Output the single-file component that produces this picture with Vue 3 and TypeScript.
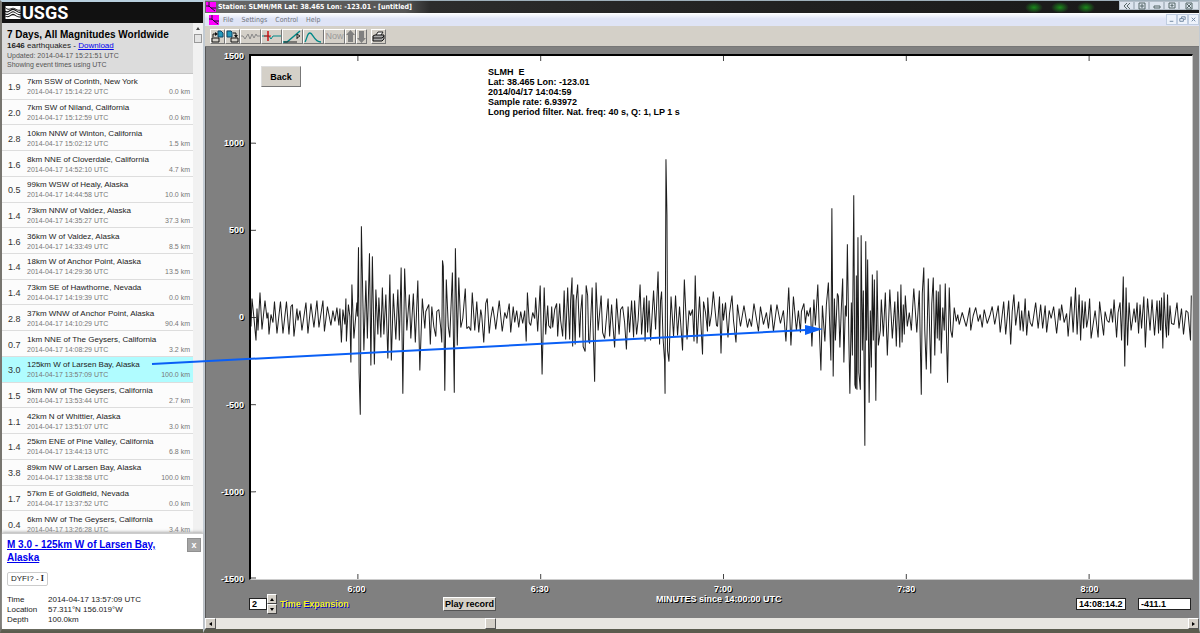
<script setup lang="ts">
import { ref } from 'vue'

interface Quake {
  mag: string
  place: string
  time: string
  depth: string
}

const quakes: Quake[] = [
  { mag: '1.9', place: '7km SSW of Corinth, New York', time: '15:14:22', depth: '0.0' },
  { mag: '2.0', place: '7km SW of Niland, California', time: '15:12:59', depth: '0.0' },
  { mag: '2.8', place: '10km NNW of Winton, California', time: '15:02:12', depth: '1.5' },
  { mag: '1.6', place: '8km NNE of Cloverdale, California', time: '14:52:10', depth: '4.7' },
  { mag: '0.5', place: '99km WSW of Healy, Alaska', time: '14:44:58', depth: '10.0' },
  { mag: '1.4', place: '73km NNW of Valdez, Alaska', time: '14:35:27', depth: '37.3' },
  { mag: '1.6', place: '36km W of Valdez, Alaska', time: '14:33:49', depth: '8.5' },
  { mag: '1.4', place: '18km W of Anchor Point, Alaska', time: '14:29:36', depth: '13.5' },
  { mag: '1.4', place: '73km SE of Hawthorne, Nevada', time: '14:19:39', depth: '0.0' },
  { mag: '2.8', place: '37km WNW of Anchor Point, Alaska', time: '14:10:29', depth: '90.4' },
  { mag: '0.7', place: '1km NNE of The Geysers, California', time: '14:08:29', depth: '3.2' },
  { mag: '3.0', place: '125km W of Larsen Bay, Alaska', time: '13:57:09', depth: '100.0' },
  { mag: '1.5', place: '5km NW of The Geysers, California', time: '13:53:44', depth: '2.7' },
  { mag: '1.1', place: '42km N of Whittier, Alaska', time: '13:51:07', depth: '3.0' },
  { mag: '1.4', place: '25km ENE of Pine Valley, California', time: '13:44:13', depth: '6.8' },
  { mag: '3.8', place: '89km NW of Larsen Bay, Alaska', time: '13:38:58', depth: '100.0' },
  { mag: '1.7', place: '57km E of Goldfield, Nevada', time: '13:37:52', depth: '0.0' },
  { mag: '0.4', place: '6km NW of The Geysers, California', time: '13:26:28', depth: '3.4' },
]
const selected = ref(11)

const menus = ['File', 'Settings', 'Control', 'Help']
const yLabels = ['1500', '1000', '500', '0', '-500', '-1000', '-1500']
const xLabels = ['6:00', '6:30', '7:00', '7:30', '8:00']
const xTicks = [357, 540, 723, 906, 1089]
const yTicks = [143, 230, 317, 404, 491]

const expansion = ref('2')
const cursorTime = ref('14:08:14.2')
const cursorValue = ref('-411.1')
const scroll = ref(28)

// Turning points of the ground motion trace
const trace = `250,326 251,298 253,318 255,340 256,308 257,330 259,292 261,329 264,300 266,318 267,312 268,334 270,314
272,322 273.5,301 276,333 279.5,301 282,333 285.5,301 288,334 290,306 291.5,304 293,336 296,308 297,320 299,310 301,330
305,302 307,333 310,303 313,327 316,300 318,327 322,300 323.5,331 326.5,306 330,325 332,310 334,321 336,307 338,325
339,308 340.5,342 342,309 344,324 345,298 345.5,341 347.5,304 349,316 350,362 351,284 353,338 356,302 356.5,316
357.6,247 358.2,372 359.4,414 360.5,226 363,350 365,280 366.5,338 368.6,253 370,365 371.5,256 373.5,364 375,289
377,334 378,297 380,337 381.5,287 383,334 385,294 387,358 389,274 390.5,360 392.5,293 395,339 397,289 398.5,340
400.3,267 402,393 403.8,268 406,330 408.5,294 410,338 412.5,293 414.5,342 417,280 419,370 421.5,298 424,328 425,311
428,304 429.5,344 431,306 433,326 435,336 436,311 438,309 440,328 441,342 441.7,260 442.5,266 444,390 445.5,279 447.5,326
449,337 451.6,272 453.5,392 454.6,248 456.5,345 458,277 460,327 462,318 464.5,288 466,328 468,326 470,330 471.5,292
474,330 476,301 478,332 480,309 481,315 483,342 485,303 486.5,298 488.5,333 490,318 492,306 494,320 495,329 498.5,300
501.5,331 504,312 506,318 508.5,303 510,332 512.5,306 514,322 516,310 518,327 520,311 522,323 524,310 525.5,341
526.7,292 528.5,322 530,325 532,312 534,318 535,297 537,331 539.5,285 541.4,374 543.5,287 545,334 547,305 548,325
550,328 551,306 552,327 554,309 556,303 557,336 559,303 560,320 562,336 563.5,290 565,339 567,287 569,339 570,300
571.4,277 572,346 573,294 574.5,344 575.5,300 577,284 579,337 580,312 581.5,294 582.5,346 584.5,351 585.5,285 587,295
588,340 589,343 591.5,287 592.5,330 594,381 595.4,282 597.5,330 600.5,295 602,332 604,338 607.5,298 609,336 611,304
612,320 614,347 616,298 618.5,334 620,309 622,306 624,322 625.8,349 627.5,306 629,332 631,300 633,337 634,300 636,334
637.5,320 639.5,284 641,334 643.5,297 644.5,341 646,295 647,332 648.5,300 650,340 653,290 655,329 657.5,271 659,344
660,300 661,291 662.5,338 664,360 664.5,393 665.4,159 666.4,215 667,350 668.4,361 670.5,296 673,336 675,295 677,335
679,306 682,350 683.8,279 686.5,339 688.5,310 690,315 692,309 693.5,341 694.7,275 696.5,343 699,296 702,354 703,301
705,312 707,331 707.2,297 709,326 711,313 712.8,291 716,325 717,326 719,296 720.5,353 722,303 723,320 725,302
727.5,337 729,313 731.5,295 733,320 735.5,342 737,304 740,326 743.5,305 747,327 749,318 751,326 753.5,303 758,331
760,306 763,324 766,312 768,328 770.5,304 773,331 776.5,304 780,323 783,310 785.5,341 788.3,287 790.5,345 793,296
796,330 798,310 800,332 801,311 803.5,303 805,323 806.5,310 808,316 810,307 811.5,346 813.5,299 815,325 817.4,284
819,331 820.5,370 822,305 824.5,341 826,304 828,282 829.5,330 830.5,360 831.5,208 832.8,376 834,298 835,340 837,293
838,296 839.5,347 841,307 842.3,278 843.5,362 845,305 846,316 847,244 848.5,340 849.5,393 851,302 852,355 853.4,195
854.5,384 855.4,388 856,275 856.6,389 857.6,237 858.5,372 860,389 860.8,235 862,350 863,290 864.5,445 865.4,241
866.3,340 867.3,259 868.8,402 870,310 871,367 872,274 873,340 874,279 875.5,400 876.7,270 878,345 880,330 881,299
883,336 885,292 887,355 889.5,289 892,338 894.5,301 896,346 897.5,291 899.5,347 900.6,284 901.8,342 903,304 904,334
905,295 907,326 909,312 910.5,325 911,330 913.5,288 916.5,332 919,290 921,394 922,293 923.5,267 924.5,330 926,369
928,278 930.5,373 931.5,303 933,277 934.5,355 936,290 937,338 938,291 939,340 939.8,284 941,353 942.5,307 944,330
945,283 947.3,382 949,287 950.5,330 952,337 954,307 956,321 957.5,314 959,324 962,312 966,326 969.5,307 970.5,330
973,315 975.5,307 978,321 980,314 982,327 984,309 987,323 990,314 992,306 994.5,324 998,305 1000,332 1003.5,301
1005.5,334 1008.5,300 1010.5,344 1012,311 1013.7,294 1015.5,325 1018.5,301 1020,330 1021.5,310 1023,331 1025,298
1026.5,335 1028.5,310 1030,322 1032,326 1035.5,302 1038,328 1040.5,304 1042.5,328 1045,305 1046.5,332 1049,310
1051,318 1053.5,306 1056.5,333 1059,308 1060,320 1061.5,304 1064,322 1066.5,313 1068,336 1071,296 1073,332
1075.4,287 1077,334 1079,294 1080.5,340 1082,300 1083.5,328 1085,301 1086.5,327 1088,318 1089.5,298 1091,338 1095,310
1098,337 1099.5,301 1102,323 1103.5,335 1105,311 1107,320 1109,322 1111,308 1112.5,322 1114,299 1116.5,337 1118,312
1120,302 1121.5,340 1123.2,276 1124.7,366 1126,287 1127.5,345 1129,302 1131,330 1134,308 1135.5,322 1137,302
1138.5,333 1140,304 1141.5,328 1143.8,296 1145.3,347 1147.5,298 1150,330 1152,299 1154.5,335 1157,300 1158.5,333
1159.5,300 1160.5,330 1161.5,297 1162.8,348 1164,292 1165.5,325 1166.5,337 1167.5,294 1168.5,335 1170,305 1171.5,323
1174,324 1177,302 1179,328 1181.5,308 1183.5,334 1186,310 1188,312 1190.5,340 1191.3,295`
</script>

<template>
  <main class="desktop">
    <aside class="side">
      <header class="brand">
        <svg class="waves" viewBox="0 0 16 16" aria-hidden="true">
          <path d="M0 1h16v6c-4 1-5-4-9-3-3 1-4 4-7 2z" fill="#fff" />
          <path d="M0 3c4 4 6-1 10 1 2 1 3 2 6 1.500" stroke="#111" fill="none" />
          <path d="M0 8c3 3 5-2 8-2s4 4 8 3M0 10.500c3 3 5-2 8-2s4 4 8 3" stroke="#fff" stroke-width="1.400" fill="none" />
          <path d="M0 12c3 3 5-1 8-1s4 3 8 2v2H0z" fill="#fff" />
        </svg>
        <span>USGS</span>
      </header>
      <div class="feed">
        <div class="feed-main">
          <section class="summary">
            <h1>7 Days, All Magnitudes Worldwide</h1>
            <p class="count"><b>1646</b> earthquakes - <a href="#download">Download</a></p>
            <p>Updated: 2014-04-17 15:21:51 UTC</p>
            <p>Showing event times using UTC</p>
          </section>
          <ul class="list">
            <li v-for="(q, i) in quakes" :key="q.time" :class="{ on: i === selected }" @click="selected = i">
              <span class="mag">{{ q.mag }}</span>
              <div class="event">
                <div class="place">{{ q.place }}</div>
                <div class="meta"><span>2014-04-17 {{ q.time }} UTC</span><span>{{ q.depth }} km</span></div>
              </div>
            </li>
          </ul>
        </div>
        <div class="vscroll"><i class="up"></i><i class="thumb"></i></div>
      </div>
      <section class="detail">
        <div class="detail-head">
          <a href="#event">M 3.0 - 125km W of Larsen Bay, Alaska</a>
          <button class="close" type="button" aria-label="Close">x</button>
        </div>
        <span class="dyfi">DYFI? - <b>I</b></span>
        <dl>
          <dt>Time</dt><dd>2014-04-17 13:57:09 UTC</dd>
          <dt>Location</dt><dd>57.311°N 156.019°W</dd>
          <dt>Depth</dt><dd>100.0km</dd>
        </dl>
      </section>
    </aside>

    <section class="window">
      <header class="title">
        <svg class="app-icon" viewBox="0 0 10 10" aria-hidden="true"><rect width="10" height="10" fill="#f0f" /><path d="M0 4h3l2 2 4 3M3 0v5M5 6h5" stroke="#213" fill="none" /></svg>
        <span>Station: SLMH/MR Lat: 38.465 Lon: -123.01 - [untitled]</span>
        <div class="glow"><i></i><i></i><i></i></div>
        <div class="caption">
          <button type="button" aria-label="Back"><svg viewBox="0 0 10 8"><path d="M5 1 2 4l3 3M8 1 5 4l3 3" /></svg></button>
          <button type="button" aria-label="Pin"><svg viewBox="0 0 10 8"><path d="M2 1h6v6H2zM3 4h4M5 2v4" /></svg></button>
          <button type="button" aria-label="Minimize"><svg viewBox="0 0 10 8"><path d="M2 4h6v2H2z" /></svg></button>
          <button type="button" aria-label="Maximize"><svg viewBox="0 0 10 8"><path d="M2 1h6v5H2zM4 3h2v1H4z" /></svg></button>
          <button type="button" aria-label="Close window" class="wide"><svg viewBox="0 0 10 8"><path d="M2 1h6v6H2zM3 2l4 4M7 2 3 6" /></svg></button>
        </div>
      </header>

      <nav class="menu">
        <svg class="app-icon" viewBox="0 0 10 10" aria-hidden="true"><rect width="10" height="10" fill="#f0f" /><path d="M0 4h3l2 2 4 3M3 0v5M5 6h5" stroke="#213" fill="none" /></svg>
        <button v-for="m in menus" :key="m" type="button">{{ m }}</button>
        <div class="mdi">
          <button type="button" aria-label="Minimize document"><svg viewBox="0 0 10 10"><path d="M3 7h4" /></svg></button>
          <button type="button" aria-label="Restore document"><svg viewBox="0 0 10 10"><path d="M4 4V2h4v3H7M2 4h4v3H2z" /></svg></button>
          <button type="button" aria-label="Close document"><svg viewBox="0 0 10 10"><path d="m3 3 4 4M7 3 3 7" /></svg></button>
        </div>
      </nav>

      <div class="tools">
        <button type="button" class="small" aria-label="Load"><svg viewBox="0 0 13 13"><path d="M7 1h3l2 2v4H7z" fill="#29b" stroke="#146" /><path d="M1 8h7v4H1zM2 7V4h3" stroke="#111" fill="none" /><path d="m4 2 3 2-3 2z" fill="#111" /></svg></button>
        <button type="button" class="small" aria-label="Store"><svg viewBox="0 0 13 13"><path d="M1 1h4l1 1v5H1z" fill="#29b" stroke="#146" /><path d="M5 8h7v4H5zM7 3h3v3" stroke="#111" fill="none" /><path d="m8 5h4l-2 3z" fill="#111" /></svg></button>
        <button type="button" aria-label="Raw trace"><svg viewBox="0 0 19 13"><path d="M0 6h2l2 3 3-5 2 5 2-5 2 4 2-4 1 2h3" stroke="#888" fill="none" /></svg></button>
        <button type="button" aria-label="Center trace"><svg viewBox="0 0 19 13"><path d="M0 6h7l2 3 2-3h8" stroke="#088" fill="none" /><path d="M6 1v10" stroke="#c11" stroke-width="1.5" /><path d="M2 6h7" stroke="#c11" /></svg></button>
        <button type="button" aria-label="Pick"><svg viewBox="0 0 19 13"><path d="M0 12h4L17 1" stroke="#088" stroke-width="1.500" fill="none" /><path d="M1 12h13M14 9V4l3 2-3 2" stroke="#222" fill="none" /></svg></button>
        <button type="button" aria-label="Filter"><svg viewBox="0 0 19 13"><path d="M1 12c2-3 2-9 5-9s4 9 11 9" stroke="#088" stroke-width="1.300" fill="none" /></svg></button>
        <button type="button" class="now" disabled>Now</button>
        <button type="button" class="arrow" aria-label="Up"><svg viewBox="0 0 9 13"><path d="M4.500 0 0 5h2v7h5V5h2z" fill="#808080" /></svg></button>
        <button type="button" class="arrow" aria-label="Down"><svg viewBox="0 0 9 13"><path d="M4.500 13 0 8h2V1h5v7h2z" fill="#808080" /></svg></button>
        <button type="button" class="small print" aria-label="Print"><svg viewBox="0 0 13 13"><path d="M4 5 6 2h5L9 5" fill="#fff" stroke="#222" /><path d="m1 6 2-1h9v4l-2 2H1z" fill="#aaa" stroke="#111" /><path d="M1 8h9l2-2" stroke="#111" fill="none" /></svg></button>
      </div>

      <div class="board">
        <div class="y-axis"><span v-for="l in yLabels" :key="l">{{ l }}</span></div>
        <div class="plot">
          <svg class="chart" viewBox="250 56 942 522" preserveAspectRatio="none" role="img" aria-label="Seismogram">
            <g stroke="#444" shape-rendering="crispEdges">
              <path v-for="x in xTicks" :key="x" :d="`M${x} 56v5M${x} 573v5`" />
              <path v-for="y in yTicks" :key="y" :d="`M250 ${y}h5`" />
              <path d="M250 577h5" />
            </g>
            <polyline :points="trace" fill="none" stroke="#1c1c1c" stroke-width="1" stroke-linejoin="bevel" />
          </svg>
          <button type="button" class="raised back">Back</button>
          <pre class="readout">SLMH  E
Lat: 38.465 Lon: -123.01
2014/04/17 14:04:59
Sample rate: 6.93972
Long period filter. Nat. freq: 40 s, Q: 1, LP 1 s</pre>
        </div>
        <div class="under">
          <div class="x-axis"><span v-for="l in xLabels" :key="l">{{ l }}</span></div>
          <div class="controls">
            <div class="expand">
              <input id="expansion" v-model="expansion" />
              <div class="spin">
                <button type="button" aria-label="Increase"><i class="tri-up"></i></button>
                <button type="button" aria-label="Decrease"><i class="tri-down"></i></button>
              </div>
              <label for="expansion">Time Expansion</label>
            </div>
            <button type="button" class="raised play">Play record</button>
            <span class="axis-name">MINUTES since 14:00:00 UTC</span>
            <div class="values">
              <input v-model="cursorTime" class="time" aria-label="Cursor time" />
              <input v-model="cursorValue" class="value" aria-label="Cursor value" />
            </div>
          </div>
        </div>
      </div>

      <div class="hscroll">
        <button type="button" aria-label="Scroll left"><i class="tri-left"></i></button>
        <input v-model="scroll" type="range" min="0" max="100" aria-label="Time position" />
        <button type="button" aria-label="Scroll right"><i class="tri-right"></i></button>
      </div>
    </section>

    <svg class="pointer" viewBox="0 0 1200 633" preserveAspectRatio="none" aria-hidden="true">
      <path d="M152 364 806 330" stroke="#0a5ff5" stroke-width="2" />
      <path d="m805 325 18 4-18 6z" fill="#0a5ff5" />
    </svg>
  </main>
</template>

<style>
body {
  margin: 0;
  overflow: hidden;
}
</style>

<style scoped>
* {
  box-sizing: border-box;
}
button,
input {
  font: inherit;
  color: inherit;
  margin: 0;
  padding: 0;
  border: 0;
  border-radius: 0;
  background: none;
}
svg {
  display: block;
}
.desktop {
  position: relative;
  display: flex;
  height: 100vh;
  font-family: 'Liberation Sans', Arial, sans-serif;
  background: #4a4a40;
}

/* Earthquake list */
.side {
  flex: none;
  width: 203px;
  display: flex;
  flex-direction: column;
  border: solid #77756f;
  border-width: 2px 0 4px 2px;
  border-top-color: #b9d0de;
  border-bottom-color: #5b5c4e;
  background: #fcfcfc;
  color: #333;
}
.brand {
  flex: none;
  height: 21px;
  display: flex;
  align-items: center;
  gap: 1px;
  padding-left: 3px;
  background: #111;
  color: #fff;
  font: bold 18px/20px Roboto, 'Liberation Sans', sans-serif;
}
.waves {
  width: 16px;
  height: 15px;
}
.feed {
  flex: 1;
  min-height: 0;
  display: flex;
}
.feed-main {
  flex: 1;
  display: flex;
  flex-direction: column;
}
.summary {
  flex: none;
  height: 51px;
  padding: 6px 5px 0;
  background: #dcdcdc;
  border-bottom: 1px solid #c4c4c4;
  font-size: 7px;
  line-height: 9px;
  color: #555;
}
.summary h1 {
  margin: 0;
  font-size: 10px;
  line-height: 12px;
  color: #000;
  white-space: nowrap;
}
.summary p {
  margin: 0;
}
.summary .count {
  font-size: 8px;
  line-height: 10px;
  color: #222;
}
a {
  color: #0000ee;
}
.list {
  flex: 1;
  margin: 0;
  padding: 0;
  list-style: none;
  display: flex;
  flex-direction: column;
}
.list li {
  flex: 1;
  min-height: 0;
  display: flex;
  align-items: center;
  padding-top: 2px;
  border-bottom: 1px solid #ddd;
}
.list .on {
  background: #b0fcff;
}
.mag {
  width: 25px;
  padding-left: 6px;
  font-size: 9px;
  line-height: 12px;
}
.event {
  flex: 1;
  padding-right: 3px;
}
.place {
  font-size: 8px;
  line-height: 10px;
  color: #222;
}
.meta {
  display: flex;
  justify-content: space-between;
  font-size: 7px;
  line-height: 10px;
  color: #777;
}
.vscroll {
  width: 10px;
  display: flex;
  flex-direction: column;
  align-items: center;
  gap: 4px;
  padding-top: 4px;
  background: #f1f1f1;
}
.up {
  border: 2px solid transparent;
  border-top: 0;
  border-bottom: 3px solid #444;
}
.thumb {
  width: 8px;
  height: 9px;
  border: 1px solid #999;
  background: #e4e4e4;
}
.detail {
  position: relative;
  flex: none;
  height: 96px;
  margin-top: -4px;
  padding: 4px 2px 0 5px;
  background: #fff;
  border-top: 1px solid #ccc;
  box-shadow: 0 -1px 3px #aaa;
  font-size: 8px;
  line-height: 10px;
  color: #222;
}
.detail-head {
  display: flex;
  justify-content: space-between;
  align-items: flex-start;
  gap: 16px;
  font-size: 10px;
  line-height: 13px;
  font-weight: bold;
}
.close {
  flex: none;
  width: 14px;
  height: 14px;
  background: #a5a5a5;
  border: 1px solid #909090;
  color: #fff;
  font-size: 9px;
  line-height: 10px;
}
.dyfi {
  display: inline-block;
  margin-top: 8px;
  padding: 1px 3px;
  border: 1px solid #ccc;
  border-radius: 2px;
}
.dyfi b {
  font-family: 'Liberation Serif', serif;
}
dl {
  display: grid;
  grid-template-columns: 41px 1fr;
  margin: 9px 0 0;
}
dd {
  margin: 0;
}

/* Seismograph window */
.window {
  flex: 1;
  min-width: 0;
  display: flex;
  flex-direction: column;
  border: solid #c3cbd3;
  border-width: 0 1px 4px 2px;
  border-bottom-color: #5b5c4e;
  background: #808080;
}
.title {
  flex: none;
  height: 13px;
  display: flex;
  align-items: center;
  border-top: 1px solid #9fb0bb;
  background: linear-gradient(90deg, #686868, #555 200px, #2c2c2c 225px, #202020 60%, #181818);
  color: #fff;
  font: bold 7px/11px 'DejaVu Sans Condensed', 'DejaVu Sans', sans-serif;
  white-space: nowrap;
}
.app-icon {
  flex: none;
  width: 10px;
  height: 10px;
  margin: 0 2px 0 1px;
}
.glow {
  display: flex;
  gap: 8px;
  margin-left: auto;
  padding-right: 24px;
}
.glow i {
  width: 18px;
  height: 11px;
  background: radial-gradient(#1a8a1a, transparent 70%);
}
.caption {
  align-self: flex-start;
  display: flex;
  background: #dce4ee;
}
.caption button {
  width: 15px;
  height: 9px;
  border: 1px solid #b4bfca;
}
.caption .wide {
  width: 20px;
}
.caption svg,
.mdi svg {
  width: 10px;
  height: 8px;
  margin: auto;
  fill: none;
  stroke: #566;
}
.menu {
  flex: none;
  height: 13px;
  display: flex;
  align-items: center;
  gap: 8px;
  background: linear-gradient(#fff, #dfe4f6 45%, #dfe4f6);
  color: #70747c;
  font: 7px/10px 'DejaVu Sans Condensed', 'DejaVu Sans', sans-serif;
}
.menu .app-icon {
  margin: 0 -4px 0 4px;
}
.mdi {
  display: flex;
  margin-left: auto;
}
.mdi button {
  width: 11px;
  height: 11px;
  border: 1px solid #c0cde0;
  background: #eef3fb;
}
.mdi svg {
  width: 9px;
  height: 9px;
  stroke: #68809c;
}
.tools {
  flex: none;
  height: 21px;
  display: flex;
  align-items: center;
  gap: 0;
  padding-left: 5px;
  background: #d4d0c8;
  border-bottom: 1px solid #777;
}
.tools button {
  width: 21px;
  height: 15px;
  border: 1px solid;
  border-color: #fff #777 #777 #fff;
}
.tools svg {
  width: 19px;
  height: 13px;
}
.tools .small {
  width: 15px;
}
.tools .small svg {
  width: 13px;
}
.tools .arrow {
  width: 11px;
}
.tools .arrow svg {
  width: 9px;
}
.tools .print {
  margin-left: 4px;
}
.tools .now {
  color: #999;
  font-size: 9px;
  line-height: 12px;
}
.board {
  flex: 1;
  min-height: 0;
  display: grid;
  grid-template: 1fr 38px / 43px 1fr;
  padding: 7px 6px 0 0;
  border-left: 1px solid #555;
  font-weight: bold;
  font-size: 9px;
  line-height: 10px;
}
.y-axis {
  display: flex;
  flex-direction: column;
  justify-content: space-between;
  align-items: flex-end;
  margin: -3px 0 -4px;
  padding-right: 5px;
}
.y-axis,
.x-axis,
.axis-name {
  color: #fff;
  text-shadow: 1px 1px #000;
}
.plot {
  position: relative;
  display: flex;
  align-items: flex-start;
  padding: 10px;
  background: #fff;
  border: solid #000;
  border-width: 2px 1px 1px 2px;
  border-right-color: #ccc;
  border-bottom-color: #ccc;
}
.chart {
  position: absolute;
  inset: 0;
  width: 100%;
  height: 100%;
}
.raised {
  position: relative;
  background: #d4d0c8;
  border: 1px solid;
  border-color: #fff #555 #555 #fff;
  color: #000;
}
.back {
  width: 40px;
  height: 21px;
  border-color: #ddd #777 #777 #ddd;
}
.readout {
  position: relative;
  margin: 0 0 0 187px;
  padding-top: 1px;
  font: bold 9px/10px 'Liberation Sans', Arial, sans-serif;
  color: #000;
}
.under {
  grid-column: 2;
}
.x-axis {
  display: grid;
  grid-template-columns: repeat(5, 1fr);
  padding: 4px 12px 0 16px;
  text-align: center;
}
.controls {
  display: flex;
  align-items: center;
  height: 20px;
}
.expand {
  display: flex;
  align-items: center;
  width: 194px;
}
.controls input {
  height: 12px;
  padding-left: 2px;
  background: #fff;
  border: 1px solid #222;
  color: #000;
}
#expansion {
  width: 18px;
}
.spin button {
  display: flex;
  align-items: center;
  justify-content: center;
  width: 10px;
  height: 10px;
  background: #d4d0c8;
  border: 1px solid;
  border-color: #fff #444 #444 #fff;
}
.tri-up,
.tri-down,
.tri-left,
.tri-right {
  border: 2px solid transparent;
}
.tri-up {
  border-top: 0;
  border-bottom: 3px solid #000;
}
.tri-down {
  border-bottom: 0;
  border-top: 3px solid #000;
}
.tri-left {
  border-left: 0;
  border-right: 3px solid #000;
}
.tri-right {
  border-right: 0;
  border-left: 3px solid #000;
}
.expand label {
  margin-left: 3px;
  color: #f4f420;
  text-shadow: 1px 1px #0000c8;
}
.play {
  width: 53px;
  height: 14px;
  white-space: nowrap;
}
.axis-name {
  margin: -10px 0 0 160px;
  white-space: nowrap;
}
.values {
  display: flex;
  gap: 12px;
  margin-left: auto;
  padding-right: 2px;
}
.values .time {
  width: 50px;
}
.values .value {
  width: 53px;
}
.hscroll {
  flex: none;
  height: 11px;
  display: flex;
  background: #e8e6e1;
}
.hscroll button {
  display: flex;
  align-items: center;
  justify-content: center;
  width: 11px;
  height: 11px;
  background: #d4d0c8;
  border: 1px solid;
  border-color: #fff #555 #555 #fff;
}
.hscroll input {
  flex: 1;
  height: 11px;
  appearance: none;
}
.hscroll input::-webkit-slider-thumb {
  appearance: none;
  width: 11px;
  height: 11px;
  background: #d4d0c8;
  border: 1px solid;
  border-color: #fff #555 #555 #fff;
}
.pointer {
  position: absolute;
  inset: 0;
  width: 100%;
  height: 100%;
  pointer-events: none;
}
</style>
